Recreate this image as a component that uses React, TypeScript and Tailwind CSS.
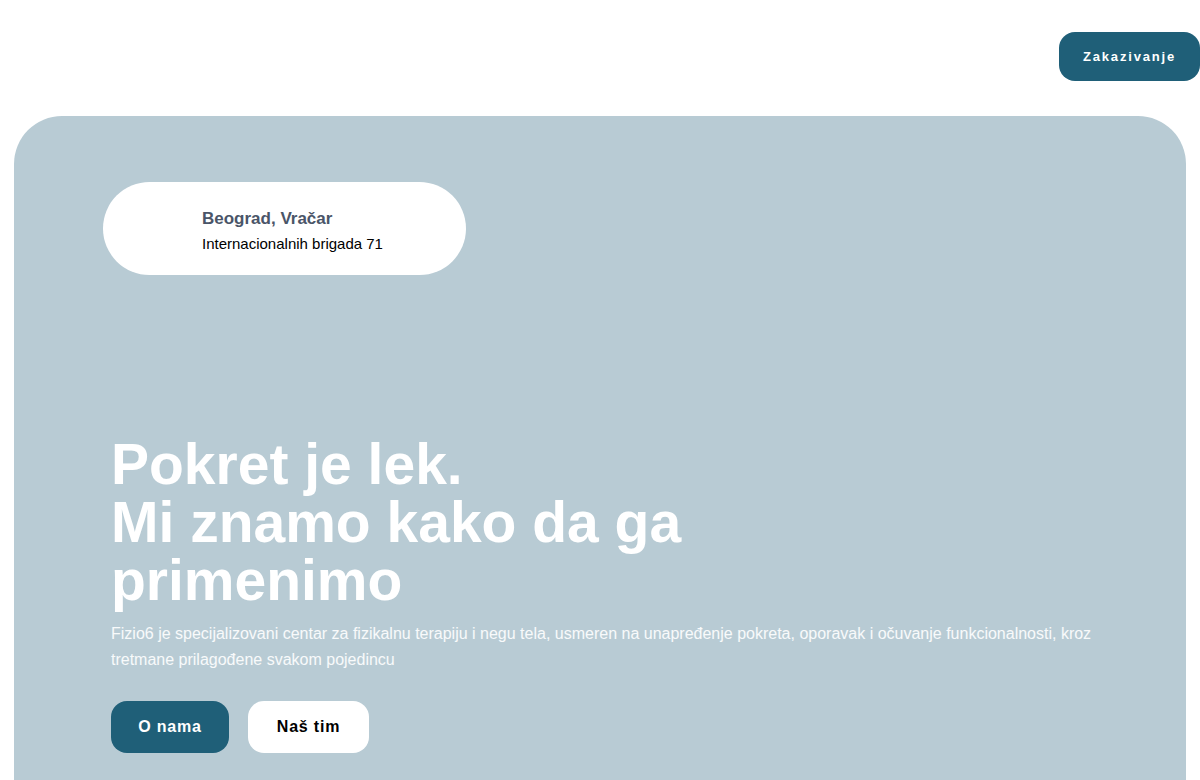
import React from "react";

export default function App() {
  return (
    <div className="min-h-screen w-full bg-white overflow-hidden font-['Liberation_Sans',Arial,sans-serif]">
      {/* Header */}
      <header className="flex justify-end pt-8 h-[116px]">
        <button className="h-[49px] w-[141px] rounded-2xl bg-[#1f5f78] text-white text-[13px] font-bold tracking-[0.14em]">
          Zakazivanje
        </button>
      </header>

      {/* Hero */}
      <section className="mx-[14px] h-[720px] rounded-[48px] bg-[#b8cbd4] pt-[66px]">
        <div className="ml-[89px] flex h-[93px] w-[363px] flex-col justify-center rounded-full bg-white pl-[99px] pt-[6px]">
          <span className="text-[17px] font-bold leading-6 text-[#4a5568]">Beograd, Vračar</span>
          <span className="text-[15px] leading-[26px] text-black">Internacionalnih brigada 71</span>
        </div>

        <div className="pl-[97px] pt-[160px]">
          <h1 className="text-[57px] font-bold leading-[58px] text-white">
            Pokret je lek.
            <br />
            Mi znamo kako da ga
            <br />
            primenimo
          </h1>
          <p className="mt-3 max-w-[995px] text-base leading-[26px] text-white/90">
            Fizio6 je specijalizovani centar za fizikalnu terapiju i negu tela, usmeren na unapređenje pokreta,
            oporavak i očuvanje funkcionalnosti, kroz tretmane prilagođene svakom pojedincu
          </p>
          <div className="mt-7 flex gap-[19px]">
            <button className="h-[52px] w-[118px] rounded-2xl bg-[#1f5f78] text-base font-bold tracking-[0.05em] text-white">
              O nama
            </button>
            <button className="h-[52px] w-[121px] rounded-2xl bg-white text-base font-bold tracking-[0.05em] text-black">
              Naš tim
            </button>
          </div>
        </div>
      </section>
    </div>
  );
}
